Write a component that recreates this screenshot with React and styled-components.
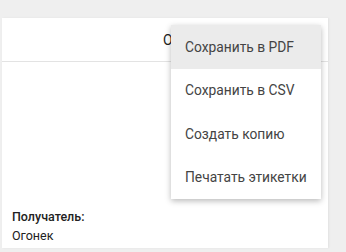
import React from 'react';
import styled, { createGlobalStyle } from 'styled-components';

const Global = createGlobalStyle`
  body {
    margin: 0;
    background: #efefef;
    font-family: Roboto, "Liberation Sans", Arial, sans-serif;
  }
`;

const items = ['Сохранить в PDF', 'Сохранить в CSV', 'Создать копию', 'Печатать этикетки'];

export default function App() {
  return (
    <>
      <Global />
      <Page>
        <Card>
          <Header>
            <Title>Огонек</Title>
          </Header>
          <Body>
            <Label>Получатель:</Label>
            <Value>Огонек</Value>
          </Body>
          <Menu>
            {items.map((t, i) => (
              <Item key={t} active={i === 0}>{t}</Item>
            ))}
          </Menu>
        </Card>
      </Page>
    </>
  );
}

const Page = styled.div`
  padding: 18px 18px 4px 2px;
  height: 252px;
  box-sizing: border-box;
`;

const Card = styled.div`
  position: relative;
  background: #fff;
  height: 230px;
  display: flex;
  flex-direction: column;
  box-shadow: 1px 0 2px rgba(0, 0, 0, 0.06);
`;

const Header = styled.div`
  height: 43px;
  border-bottom: 1px solid #e3e3e3;
  display: flex;
  align-items: center;
  padding-left: 161px;
`;

const Title = styled.span`
  font-size: 14px;
  color: #222;
`;

const Body = styled.div`
  flex: 1;
  display: flex;
  flex-direction: column;
  justify-content: flex-end;
  padding: 0 10px 3px;
`;

const Label = styled.div`
  font-size: 12.5px;
  font-weight: 500;
  line-height: 19px;
  color: #222;
`;

const Value = styled.div`
  font-size: 12.5px;
  line-height: 19px;
  color: #222;
`;

const Menu = styled.div`
  position: absolute;
  top: 7px;
  left: 169px;
  width: 150px;
  background: #fff;
  box-shadow: 0 2px 6px rgba(0, 0, 0, 0.28);
`;

const Item = styled.div`
  height: 43.5px;
  display: flex;
  align-items: center;
  padding-left: 14px;
  font-size: 13.8px;
  color: #444;
  background: ${p => (p.active ? '#ebebeb' : '#fff')};
`;
